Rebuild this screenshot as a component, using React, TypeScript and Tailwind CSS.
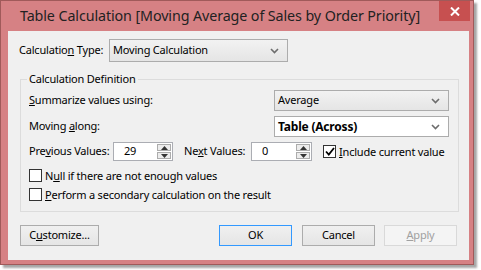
import React from 'react'

const font = { fontFamily: '"Noto Sans", "Open Sans", sans-serif' }

const Chevron = () => (
  <svg width="9" height="6" viewBox="0 0 9 6" className="shrink-0">
    <path d="M1 1 L4.5 4.5 L8 1" fill="none" stroke="#6d6d6d" strokeWidth="1.6" />
  </svg>
)

const Select = ({ label, bold, white, className }: { label: string; bold?: boolean; white?: boolean; className: string }) => (
  <div
    className={`flex items-center justify-between border border-[#acacac] pl-[3px] pr-[8px] ${
      white ? 'bg-white' : 'bg-gradient-to-b from-[#f2f2f2] to-[#e5e5e5]'
    } ${className}`}
  >
    <span className={bold ? 'text-[12px] font-bold text-black' : 'text-[11px] text-black'}>{label}</span>
    <Chevron />
  </div>
)

const Spin = ({ value, className }: { value: string; className: string }) => (
  <div className={`flex h-[19px] border border-[#abadb3] bg-white ${className}`}>
    <div className="flex flex-1 items-center pl-[10px] text-[11px] text-black">{value}</div>
    <div className="flex w-[16px] flex-col gap-[1px] p-[1px]">
      <div className="flex flex-1 items-center justify-center border border-[#acacac] bg-[#ececec]">
        <svg width="7" height="4" viewBox="0 0 7 4"><path d="M0 4 L3.5 0 L7 4Z" fill="#333" /></svg>
      </div>
      <div className="flex flex-1 items-center justify-center border border-[#acacac] bg-[#ececec]">
        <svg width="7" height="4" viewBox="0 0 7 4"><path d="M0 0 L3.5 4 L7 0Z" fill="#333" /></svg>
      </div>
    </div>
  </div>
)

const Check = ({ checked, children }: { checked?: boolean; children: React.ReactNode }) => (
  <div className="flex h-[13px] items-center gap-[3px]">
    <div className="flex h-[13px] w-[13px] shrink-0 items-center justify-center border border-[#333] bg-white">
      {checked && (
        <svg width="10" height="9" viewBox="0 0 10 9">
          <path d="M1 4.5 L3.8 7.5 L9 1" fill="none" stroke="#000" strokeWidth="1.8" />
        </svg>
      )}
    </div>
    <span className="whitespace-nowrap text-[11px] leading-[13px] text-black">{children}</span>
  </div>
)

const Btn = ({ children, className }: { children: React.ReactNode; className: string }) => (
  <div className={`flex h-[21px] items-center justify-center whitespace-nowrap text-[11px] ${className}`}>{children}</div>
)

export default function App() {
  return (
    <div className="h-[270px] w-[481px] bg-white" style={font}>
      <div className="flex h-[265px] w-[474px] flex-col border border-[#a05a5a] bg-[#d68184] shadow-[3px_3px_2px_rgba(0,0,0,0.35)]">
        <div className="flex h-[30px] items-start">
          <div className="flex h-[30px] flex-1 items-center justify-center whitespace-nowrap text-[14.3px] tracking-[-0.1px] text-[#222]">
            Table Calculation [Moving Average of Sales by Order Priority]
          </div>
          <div className="mr-[3px] flex h-[20px] w-[31px] items-center justify-center bg-[#c75050]">
            <svg width="10" height="9" viewBox="0 0 10 9">
              <path d="M1 0.5 L9 8.5 M9 0.5 L1 8.5" stroke="#fff" strokeWidth="2" />
            </svg>
          </div>
        </div>

        <div className="mb-[4px] ml-[7px] mr-[4px] flex flex-1 flex-col whitespace-nowrap bg-[#f0f0f0] text-[11px] tracking-[-0.2px] text-black">
          <div className="mt-[8px] flex items-center pl-[11px]">
            <span className="w-[90px]">
              Calculatio<u>n</u> Type:
            </span>
            <Select label="Moving Calculation" className="h-[23px] w-[179px]" />
          </div>

          <div className="relative ml-[12px] mr-[10px] mt-[17px] h-[133px] border border-[#dcdcdc]">
            <span className="absolute -top-[9px] left-[6px] bg-[#f0f0f0] px-[2px] leading-[16px]">Calculation Definition</span>
            <div className="flex flex-col pl-[8px] pr-[9px] pt-[10px]">
              <div className="flex h-[21px] items-center justify-between">
                <span>
                  <u>S</u>ummarize values using:
                </span>
                <Select label="Average" className="h-[21px] w-[175px]" />
              </div>
              <div className="mt-[5px] flex h-[21px] items-center justify-between">
                <span>
                  Moving <u>a</u>long:
                </span>
                <Select label="Table (Across)" bold white className="h-[21px] w-[175px]" />
              </div>
              <div className="mt-[5px] flex items-center">
                <span className="w-[84px]">
                  Pre<u>v</u>ious Values:
                </span>
                <Spin value="29" className="w-[60px]" />
                <span className="ml-[11px] w-[67px]">
                  Ne<u>x</u>t Values:
                </span>
                <Spin value="0" className="w-[61px]" />
                <div className="ml-[11px]">
                  <Check checked>
                    <u>I</u>nclude current value
                  </Check>
                </div>
              </div>
              <div className="mt-[8px]">
                <Check>
                  N<u>u</u>ll if there are not enough values
                </Check>
              </div>
              <div className="mt-[6px]">
                <Check>
                  <u>P</u>erform a secondary calculation on the result
                </Check>
              </div>
            </div>
          </div>

          <div className="mt-[13px] flex items-center pl-[12px] pr-[12px]">
            <Btn className="w-[79px] border border-[#acacac] bg-gradient-to-b from-[#f0f0f0] to-[#e5e5e5]">
              C<u>u</u>stomize...
            </Btn>
            <div className="flex-1" />
            <Btn className="w-[73px] border border-[#3399ff] bg-gradient-to-b from-[#f0f0f0] to-[#e5e5e5]">OK</Btn>
            <Btn className="ml-[10px] w-[73px] border border-[#acacac] bg-gradient-to-b from-[#f0f0f0] to-[#e5e5e5]">
              Cancel
            </Btn>
            <Btn className="ml-[9px] w-[73px] border border-[#d9d9d9] bg-[#f4f4f4] text-[#a0a0a0]">
              <u>A</u>pply
            </Btn>
          </div>
        </div>
      </div>
    </div>
  )
}
